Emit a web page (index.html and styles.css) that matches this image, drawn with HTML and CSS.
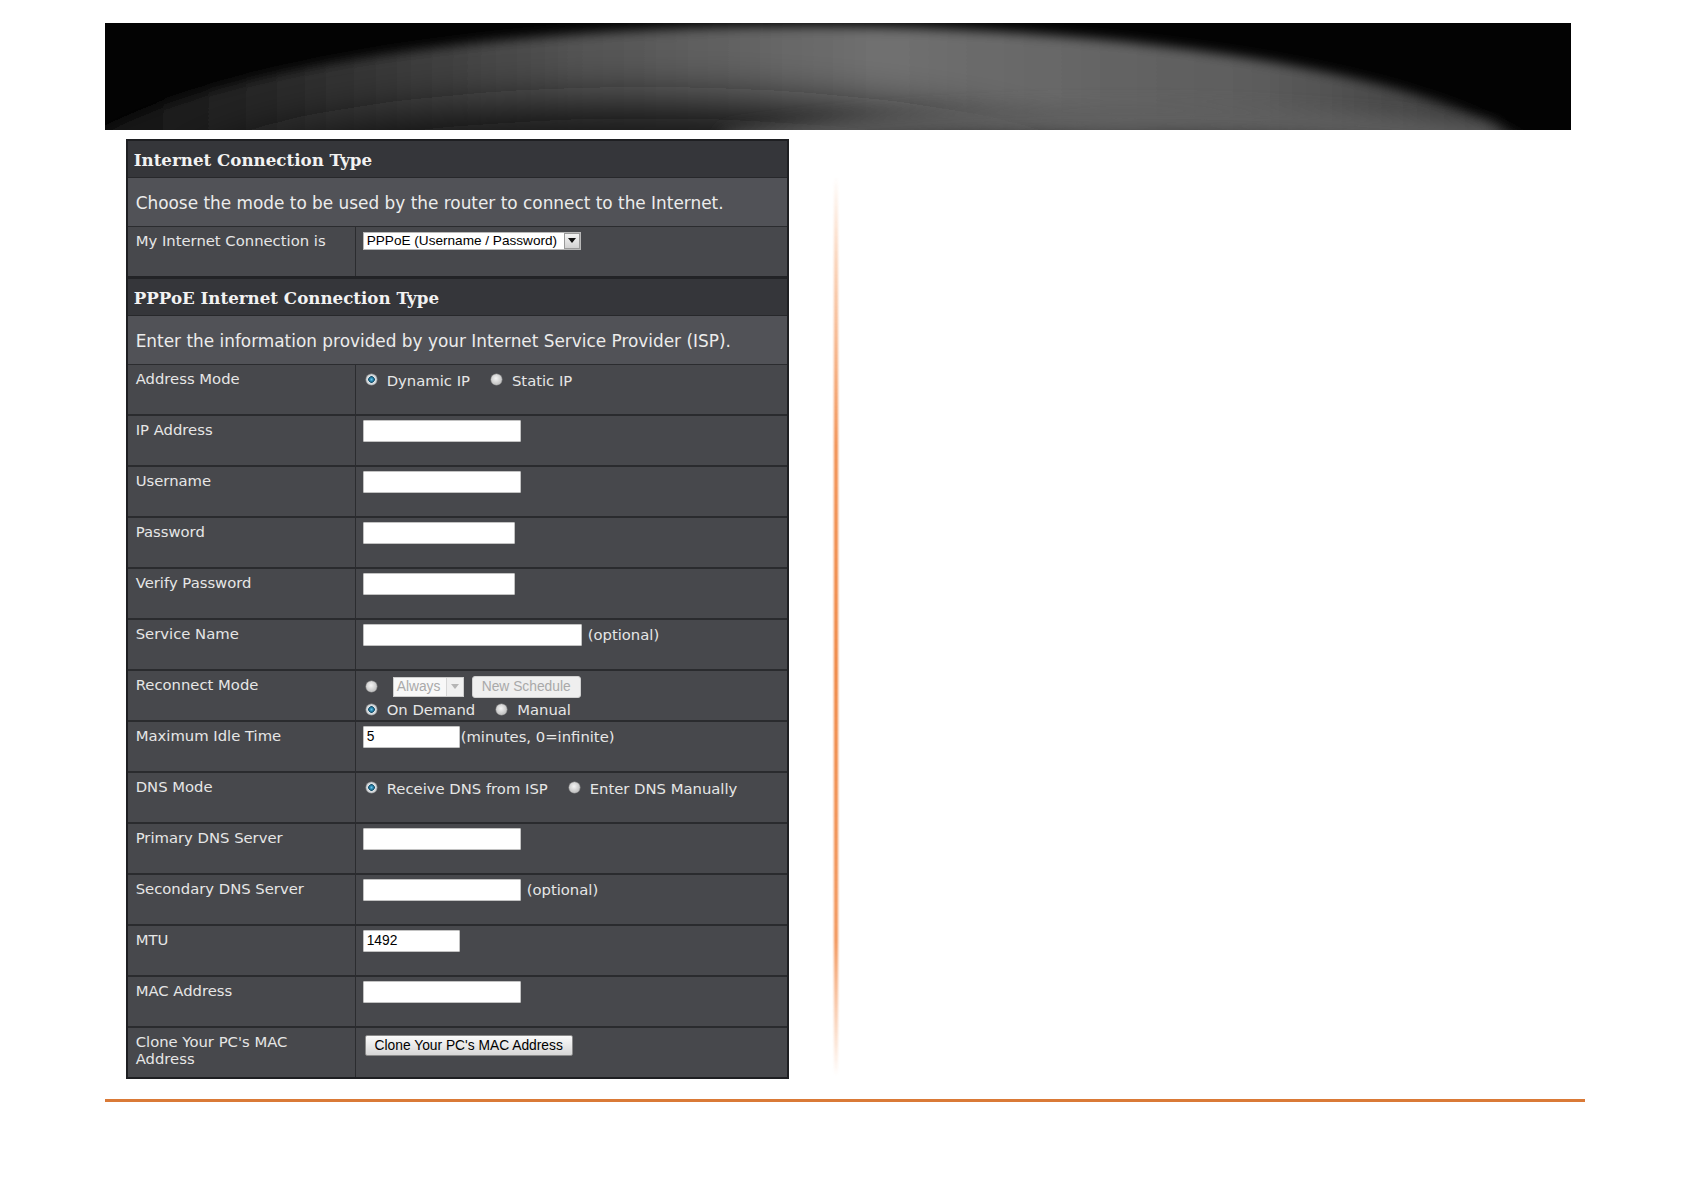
FILE: index.html
```html
<!DOCTYPE html>
<html lang="en">
<head>
<meta charset="utf-8">
<title>Internet Connection Type</title>
<link rel="stylesheet" href="styles.css">
</head>
<body>
<div class="page">
  <div class="banner">
    <svg class="banner-art" viewBox="0 0 1466 108" preserveAspectRatio="none" width="1466" height="108">
      <defs>
        <filter id="fEdge" x="-10%" y="-100%" width="120%" height="300%"><feGaussianBlur stdDeviation="6"/></filter>
        <filter id="fSoft" x="-20%" y="-150%" width="140%" height="400%"><feGaussianBlur stdDeviation="24"/></filter>
        <filter id="fBand" x="-20%" y="-150%" width="140%" height="400%"><feGaussianBlur stdDeviation="9"/></filter>
        <linearGradient id="gArc" x1="0" y1="0" x2="1" y2="0">
          <stop offset="0" stop-color="#0a0a0a"/>
          <stop offset="0.15" stop-color="#282828"/>
          <stop offset="0.35" stop-color="#535353"/>
          <stop offset="0.55" stop-color="#707070"/>
          <stop offset="0.8" stop-color="#5c5c5c"/>
          <stop offset="1" stop-color="#303030"/>
        </linearGradient>
      </defs>
      <rect width="1466" height="108" fill="#030303"/>
      <ellipse cx="700" cy="173" rx="760" ry="170" fill="url(#gArc)" filter="url(#fEdge)"/>
      <ellipse cx="540" cy="175" rx="470" ry="95" fill="#141414" filter="url(#fSoft)"/>
      <path d="M620 122 Q 980 70 1390 116" fill="none" stroke="#5e5e5e" stroke-width="20" filter="url(#fBand)"/>
      <path d="M760 146 Q 1080 108 1370 148" fill="none" stroke="#161616" stroke-width="22" filter="url(#fBand)"/>
    </svg>
  </div>

  <div class="content">
    <div class="panel">
      <div class="sec-title">Internet Connection Type</div>
      <div class="sec-desc">Choose the mode to be used by the router to connect to the Internet.</div>
      <div class="row row-tall-border">
        <div class="label">My Internet Connection is</div>
        <div class="field">
          <div class="select">
            <span class="select-text">PPPoE (Username / Password)</span>
            <span class="select-btn"><span class="tri"></span></span>
          </div>
        </div>
      </div>

      <div class="sec-title">PPPoE Internet Connection Type</div>
      <div class="sec-desc sec-desc-b">Enter the information provided by your Internet Service Provider (ISP).</div>

      <div class="row">
        <div class="label">Address Mode</div>
        <div class="field field-radio">
          <span class="radio on"></span><span class="opt">Dynamic IP</span>
          <span class="radio"></span><span class="opt">Static IP</span>
        </div>
      </div>
      <div class="row">
        <div class="label">IP Address</div>
        <div class="field"><input class="txt w158" type="text" value=""></div>
      </div>
      <div class="row">
        <div class="label">Username</div>
        <div class="field"><input class="txt w158" type="text" value=""></div>
      </div>
      <div class="row">
        <div class="label">Password</div>
        <div class="field"><input class="txt w152" type="text" value=""></div>
      </div>
      <div class="row">
        <div class="label">Verify Password</div>
        <div class="field"><input class="txt w152" type="text" value=""></div>
      </div>
      <div class="row">
        <div class="label">Service Name</div>
        <div class="field"><input class="txt w219" type="text" value=""><span class="note">(optional)</span></div>
      </div>
      <div class="row">
        <div class="label">Reconnect Mode</div>
        <div class="field field-stack">
          <div class="line1">
            <span class="radio"></span>
            <div class="dsel"><span class="dsel-text">Always</span><span class="dsel-btn"><span class="tri tri-dis"></span></span></div>
            <span class="dbtn">New Schedule</span>
          </div>
          <div class="line2">
            <span class="radio on"></span><span class="opt">On Demand</span>
            <span class="radio"></span><span class="opt">Manual</span>
          </div>
        </div>
      </div>
      <div class="row">
        <div class="label">Maximum Idle Time</div>
        <div class="field"><input class="txt w97" type="text" value="5"><span class="note note-tight">(minutes, 0=infinite)</span></div>
      </div>
      <div class="row">
        <div class="label">DNS Mode</div>
        <div class="field field-radio">
          <span class="radio on"></span><span class="opt">Receive DNS from ISP</span>
          <span class="radio"></span><span class="opt">Enter DNS Manually</span>
        </div>
      </div>
      <div class="row">
        <div class="label">Primary DNS Server</div>
        <div class="field"><input class="txt w158" type="text" value=""></div>
      </div>
      <div class="row">
        <div class="label">Secondary DNS Server</div>
        <div class="field"><input class="txt w158" type="text" value=""><span class="note">(optional)</span></div>
      </div>
      <div class="row">
        <div class="label">MTU</div>
        <div class="field"><input class="txt w97" type="text" value="1492"></div>
      </div>
      <div class="row">
        <div class="label">MAC Address</div>
        <div class="field"><input class="txt w158" type="text" value=""></div>
      </div>
      <div class="row row-last">
        <div class="label">Clone Your PC's MAC<br>Address</div>
        <div class="field"><span class="btn">Clone Your PC's MAC Address</span></div>
      </div>
    </div>
    <div class="vline"></div>
  </div>

  <div class="footer-line"></div>
</div>
</body>
</html>
```

FILE: styles.css
```css
* { box-sizing: border-box; }

html, body {
  margin: 0;
  padding: 0;
  background: #ffffff;
}

.page {
  padding: 22.6px 0 0 105px;
  width: 1684px;
}

.banner {
  width: 1466px;
  height: 107.5px;
  background: #000;
  overflow: hidden;
}

.banner-art {
  display: block;
  width: 1466px;
  height: 107.5px;
}

.content {
  display: flex;
  align-items: flex-start;
  margin-top: 8.6px;
  margin-left: 20.7px;
}

.panel {
  width: 663px;
  border: 2px solid #1e1f22;
  background: #47484c;
  font-family: "DejaVu Sans", Verdana, sans-serif;
  color: #e6e6e6;
}

.sec-title {
  height: 37px;
  border-bottom: 1px solid #27282b;
  background: #35363a;
  font-family: "DejaVu Serif", Georgia, serif;
  font-weight: bold;
  font-size: 16.7px;
  line-height: 38px;
  padding-left: 6px;
  color: #f2f2f2;
}

.sec-desc {
  height: 49px;
  border-bottom: 1px solid #2b2c2f;
  background: #515257;
  font-size: 16.9px;
  line-height: 50px;
  padding-left: 8px;
  color: #ececec;
}

.sec-desc-b {
  height: 49px;
}

.row {
  display: flex;
  height: 51px;
  border-bottom: 2px solid #2a2b2e;
}

.row-tall-border {
  border-bottom: 3px solid #222326;
  height: 52px;
}

.row-last {
  border-bottom: 0;
  height: 49px;
}

.label {
  width: 228px;
  flex: none;
  border-right: 1px solid #2b2c2f;
  padding: 5px 8px 0 8px;
  font-size: 14.8px;
  line-height: 17.5px;
  color: #e6e6e6;
}

.field {
  flex: 1;
  display: flex;
  align-items: flex-start;
  padding: 4px 0 0 7px;
  font-size: 14.8px;
  line-height: 17px;
}

.field-radio {
  padding-top: 7px;
}

.field-radio .opt {
  margin-right: 18px;
}

.opt {
  color: #e6e6e6;
  white-space: nowrap;
}

.radio {
  flex: none;
  display: inline-block;
  width: 11px;
  height: 11px;
  border-radius: 50%;
  margin: 2px 10px 0 3px;
  background: radial-gradient(circle at 45% 40%, #f4f4f4 0, #d4d4d4 45%, #a9a9a9 100%);
  box-shadow: 0 0 0 0.5px #8e8e8e;
}

.radio.on {
  background: radial-gradient(circle at 50% 50%, #6cc3e6 0, #2b88b2 1.6px, #184f69 3px, #dfe3e6 3.6px, #c4c8cb 70%, #a3a6a9 100%);
}

.line1 .radio,
.line2 .radio {
  margin-top: 0;
}

.txt {
  display: block;
  height: 22px;
  margin: 0;
  padding: 0 3px;
  border: 1px solid #c2c2c2;
  border-radius: 1px;
  background: #ffffff;
  font-family: "Liberation Sans", Arial, sans-serif;
  font-size: 13.8px;
  color: #000;
  outline: none;
}

.w158 { width: 158px; }
.w152 { width: 152px; }
.w219 { width: 219px; }
.w97 { width: 97px; }

.note {
  margin-left: 6px;
  line-height: 22px;
  color: #e6e6e6;
  white-space: nowrap;
}

.note-tight {
  margin-left: 1px;
}

/* main select */
.select {
  display: flex;
  height: 18px;
  width: 218px;
  margin-top: 1px;
  background: #ffffff;
  border: 1px solid #b8b8b8;
  font-family: "Liberation Sans", Arial, sans-serif;
  font-size: 13.6px;
  line-height: 16px;
  color: #000;
}

.select-text {
  flex: 1;
  padding-left: 3px;
  white-space: nowrap;
}

.select-btn {
  flex: none;
  width: 16px;
  height: 16px;
  background: linear-gradient(#f4f4f4, #d2d2d2);
  border: 1px solid #9a9a9a;
  display: flex;
  align-items: center;
  justify-content: center;
}

.tri {
  width: 0;
  height: 0;
  border-left: 4px solid transparent;
  border-right: 4px solid transparent;
  border-top: 5px solid #111;
}

.tri-dis {
  border-top-color: #b5b5b5;
}

/* reconnect stacked cell */
.field-stack {
  flex-direction: column;
  padding-top: 5px;
}

.line1 {
  display: flex;
  align-items: center;
  height: 22px;
}

.line2 {
  display: flex;
  align-items: center;
  margin-top: 3px;
  height: 17px;
}

.line2 .opt {
  margin-right: 18px;
}

.dsel {
  display: flex;
  height: 20px;
  width: 71px;
  margin-left: 6px;
  background: #f8f8f8;
  border: 1px solid #cdcdcd;
  font-family: "Liberation Sans", Arial, sans-serif;
  font-size: 13.8px;
  line-height: 18px;
  color: #a9a9a9;
}

.dsel-text {
  flex: 1;
  padding-left: 3px;
}

.dsel-btn {
  flex: none;
  width: 17px;
  border-left: 1px solid #d6d6d6;
  background: #f0f0f0;
  display: flex;
  align-items: center;
  justify-content: center;
}

.dbtn {
  display: inline-block;
  height: 22px;
  width: 109px;
  margin-left: 8px;
  background: #efefef;
  border: 1px solid #d0d0d0;
  border-radius: 3px;
  font-family: "Liberation Sans", Arial, sans-serif;
  font-size: 13.8px;
  line-height: 20px;
  color: #a9a9a9;
  text-align: center;
}

/* clone button */
.btn {
  display: inline-block;
  margin: 3px 0 0 2px;
  height: 21px;
  width: 208px;
  border: 1px solid #8a8a8a;
  border-radius: 2px;
  background: linear-gradient(#fbfbfb, #e9e9e9 50%, #d6d6d6);
  font-family: "Liberation Sans", Arial, sans-serif;
  font-size: 13.8px;
  line-height: 19px;
  color: #000;
  text-align: center;
  white-space: nowrap;
}

/* decorative vertical divider */
.vline {
  flex: none;
  width: 4px;
  height: 900px;
  margin-left: 45.8px;
  margin-top: 37px;
  border-radius: 2px;
  background: linear-gradient(to bottom,
    rgba(242, 140, 72, 0) 0%,
    rgba(242, 140, 72, 0.4) 10%,
    rgba(240, 130, 60, 0.9) 30%,
    #ef843f 55%,
    rgba(240, 130, 60, 0.85) 85%,
    rgba(242, 140, 72, 0) 100%);
  filter: blur(0.8px);
}

.footer-line {
  width: 1480px;
  height: 2.5px;
  margin-top: 20.5px;
  background: #da7a37;
}
```
